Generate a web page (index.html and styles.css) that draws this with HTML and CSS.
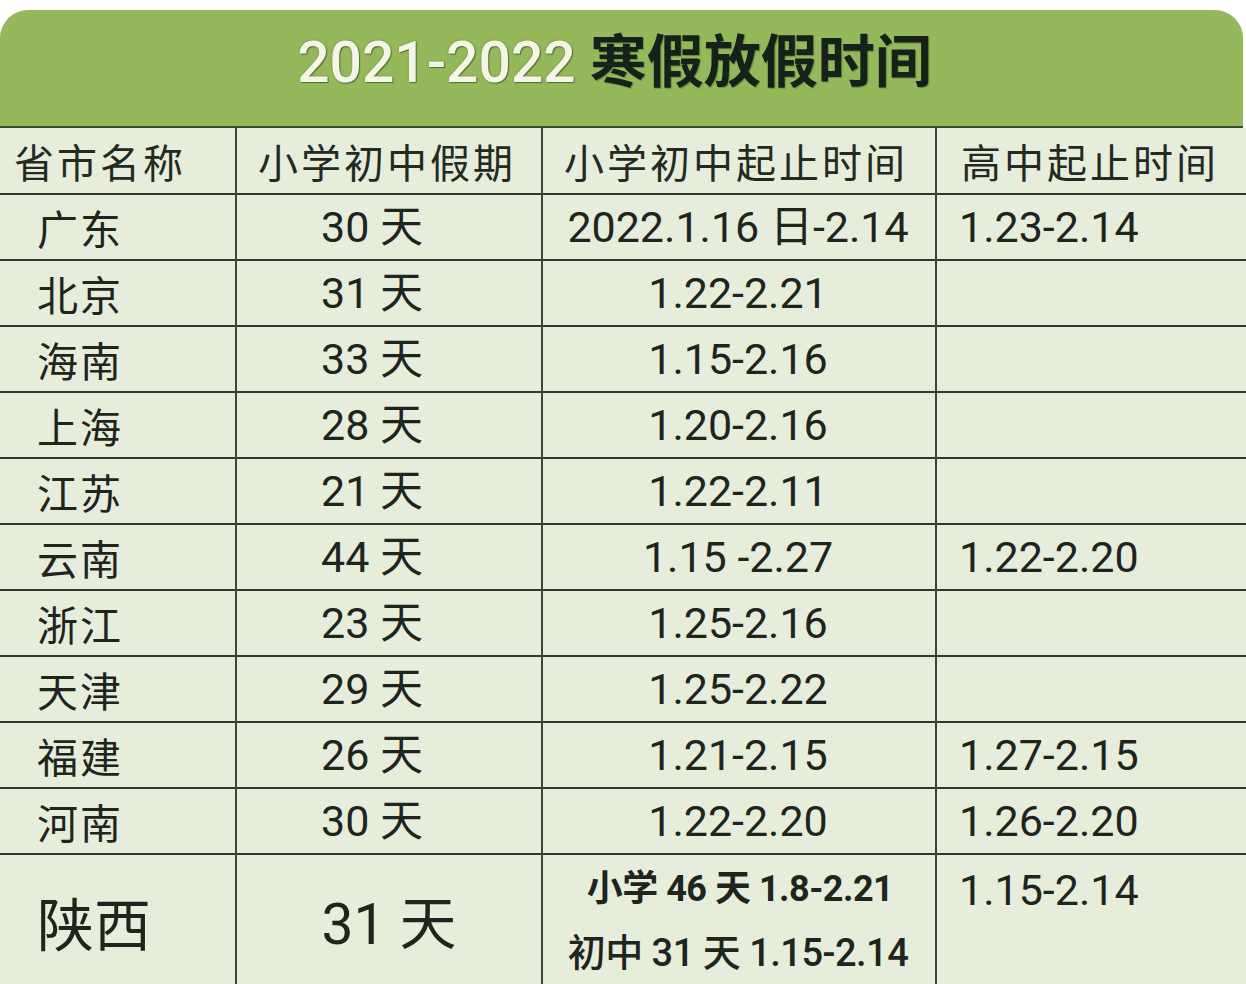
FILE: index.html
```html
<!DOCTYPE html>
<html lang="zh">
<head>
<meta charset="utf-8">
<title>2021-2022 寒假放假时间</title>
<link rel="stylesheet" href="styles.css">
</head>
<body>
<div class="sheet">
  <div class="banner">
    <h1 class="title"><span class="year">2021-2022</span> <span class="cn">寒假放假时间</span></h1>
  </div>
  <table class="grid">
    <colgroup>
      <col class="c1"><col class="c2"><col class="c3"><col class="c4">
    </colgroup>
    <thead>
      <tr class="head">
        <th class="name">省市名称</th>
        <th class="days">小学初中假期</th>
        <th class="range">小学初中起止时间</th>
        <th class="high">高中起止时间</th>
      </tr>
    </thead>
    <tbody>
      <tr><td class="name">广东</td><td class="days">30 天</td><td class="range">2022.1.16 日-2.14</td><td class="high">1.23-2.14</td></tr>
      <tr><td class="name">北京</td><td class="days">31 天</td><td class="range">1.22-2.21</td><td class="high"></td></tr>
      <tr><td class="name">海南</td><td class="days">33 天</td><td class="range">1.15-2.16</td><td class="high"></td></tr>
      <tr><td class="name">上海</td><td class="days">28 天</td><td class="range">1.20-2.16</td><td class="high"></td></tr>
      <tr><td class="name">江苏</td><td class="days">21 天</td><td class="range">1.22-2.11</td><td class="high"></td></tr>
      <tr><td class="name">云南</td><td class="days">44 天</td><td class="range">1.15 -2.27</td><td class="high">1.22-2.20</td></tr>
      <tr><td class="name">浙江</td><td class="days">23 天</td><td class="range">1.25-2.16</td><td class="high"></td></tr>
      <tr><td class="name">天津</td><td class="days">29 天</td><td class="range">1.25-2.22</td><td class="high"></td></tr>
      <tr><td class="name">福建</td><td class="days">26 天</td><td class="range">1.21-2.15</td><td class="high">1.27-2.15</td></tr>
      <tr><td class="name">河南</td><td class="days">30 天</td><td class="range">1.22-2.20</td><td class="high">1.26-2.20</td></tr>
      <tr class="last">
        <td class="name big">陕西</td>
        <td class="days big">31 天</td>
        <td class="range split">
          <div class="line1">小学 46 天 1.8-2.21</div>
          <div class="line2">初中 31 天 1.15-2.14</div>
        </td>
        <td class="high top">1.15-2.14</td>
      </tr>
    </tbody>
  </table>
</div>
</body>
</html>
```

FILE: styles.css
```css
html, body {
  margin: 0;
  padding: 0;
  background: #ffffff;
  height: 984px;
  overflow: hidden;
}

body {
  font-family: Roboto, "Noto Sans CJK SC", sans-serif;
  color: #1d251d;
}

.sheet {
  padding-top: 10px;
  width: 1246px;
}

.banner {
  height: 116px;
  margin-right: 3px;
  background: #95b95a;
  border-radius: 28px 28px 0 0;
  border-bottom: 2px solid #3d4d32;
  display: flex;
  align-items: center;
  justify-content: center;
}

.title {
  margin: 0 0 16px 0;
  font-size: 57px;
  line-height: 1;
  font-weight: 700;
  white-space: nowrap;
  padding-right: 14px;
}

.year {
  font-family: Roboto, sans-serif;
  font-weight: 500;
  color: #f3f6e6;
  text-shadow: 0 0 2px #5d7a3a, 1px 1px 1px #4f6a30;
}

.cn {
  font-family: "Noto Sans CJK SC", sans-serif;
  font-weight: 700;
  color: #16211a;
  text-shadow: 1px 1px 1px #6a8a44;
}

.grid {
  width: 1246px;
  border-collapse: collapse;
  table-layout: fixed;
  background: #e7eddb;
}

.c1 { width: 236px; }
.c2 { width: 306px; }
.c3 { width: 394px; }
.c4 { width: 310px; }

.grid th,
.grid td {
  height: 64px;
  padding: 0;
  border-top: 2px solid #2f3a2f;
  border-left: 2px solid #3a463a;
  font-size: 43px;
  line-height: 1;
  font-weight: 400;
  vertical-align: middle;
  white-space: nowrap;
}

.grid tr > :first-child {
  border-left: none;
}

.grid thead th {
  border-top: none;
  height: 65px;
  font-family: "Noto Sans CJK SC", sans-serif;
  font-size: 40px;
  font-weight: 400;
  letter-spacing: 3px;
  color: #222a22;
}

.grid th.name { text-align: left; padding-left: 14px; }
.grid th.days { text-align: center; padding-right: 4px; }
.grid th.range { text-align: center; padding-right: 6px; }
.grid th.high { text-align: left; padding-left: 24px; }

.grid td.name {
  font-family: "Noto Sans CJK SC", sans-serif;
  font-size: 41px;
  letter-spacing: 2px;
  padding-left: 37px;
  text-align: left;
}

.grid td.days {
  text-align: center;
  padding-right: 34px;
}

.grid td.range {
  text-align: center;
  padding-right: 2px;
}

.grid td.high {
  text-align: left;
  padding-left: 22px;
}

.grid tr.last td {
  height: 132px;
}

.grid td.big {
  font-size: 57px;
}

.grid td.name.big {
  padding-bottom: 22px;
  letter-spacing: 0;
}

.grid td.days.big {
  padding-right: 0;
  padding-bottom: 16px;
}

.grid td.split {
  vertical-align: top;
  padding-top: 14px;
}

.line1 {
  font-size: 36px;
  font-weight: 700;
  letter-spacing: -0.5px;
  height: 64px;
  line-height: 40px;
  padding-left: 4px;
}

.line2 {
  font-size: 38px;
  font-weight: 500;
  letter-spacing: -0.5px;
  line-height: 40px;
}

.grid td.top {
  vertical-align: top;
  padding-top: 14px;
}
```
